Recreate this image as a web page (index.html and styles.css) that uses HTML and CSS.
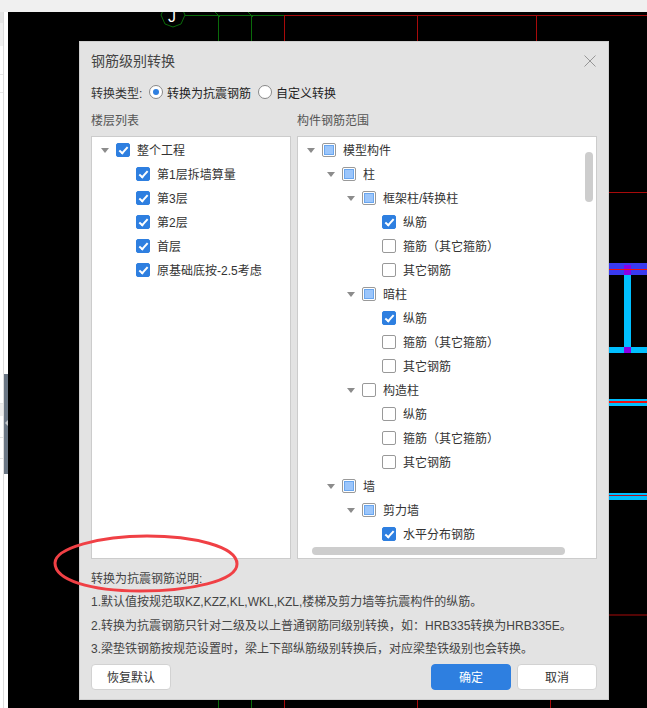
FILE: index.html
```html
<!DOCTYPE html>
<html lang="zh-CN">
<head>
    <meta charset="UTF-8">
    <meta name="viewport" content="width=device-width, initial-scale=1.0">
    <title>钢筋级别转换</title>
    <link rel="stylesheet" href="styles.css">
</head>
<body>
    <!-- CAD drawing behind the dialog -->
    <svg class="drawing" width="647" height="708" viewBox="0 0 647 708">
        <g stroke="#0a6a0a" fill="none">
            <polygon points="173,3 181,6 185,15 181,24 173,27 165,24 161,15 165,6" />
            <line x1="185" y1="15.5" x2="284" y2="15.5" />
            <line x1="218.5" y1="15" x2="218.5" y2="41" />
            <line x1="251.5" y1="15" x2="251.5" y2="41" />
            <line x1="215" y1="12" x2="220" y2="17" />
            <line x1="248" y1="12" x2="253" y2="17" />
            <line x1="218.5" y1="700" x2="218.5" y2="708" />
            <line x1="251.5" y1="700" x2="251.5" y2="708" />
        </g>
        <text x="168" y="22" class="axis-label">J</text>
        <g stroke="#a80a0a" fill="none">
            <line x1="284" y1="15.5" x2="647" y2="15.5" />
            <line x1="284.5" y1="15" x2="284.5" y2="41" />
            <line x1="417.5" y1="15" x2="417.5" y2="41" />
            <line x1="536.5" y1="15" x2="536.5" y2="41" />
            <line x1="284.5" y1="700" x2="284.5" y2="708" />
            <line x1="417.5" y1="700" x2="417.5" y2="708" />
            <line x1="550.5" y1="700" x2="550.5" y2="708" />
            <line x1="609" y1="192.5" x2="647" y2="192.5" />
            <line x1="609" y1="615" x2="647" y2="615" />
        </g>
        <rect x="609" y="263" width="38" height="12" fill="#3a3af0" />
        <rect x="624" y="275" width="7" height="72" fill="#00bfff" />
        <rect x="609" y="347" width="38" height="6" fill="#00bfff" />
        <rect x="609" y="399" width="38" height="7" fill="#00bfff" />
        <rect x="609" y="493" width="38" height="7" fill="#00bfff" />
        <rect x="624" y="265" width="7" height="10" fill="#8a00e6" />
        <rect x="624" y="347" width="7" height="6" fill="#8a00e6" />
        <rect x="609" y="269" width="38" height="1" fill="#f01010" />
        <rect x="609" y="401" width="38" height="2" fill="#f01010" />
        <rect x="609" y="495" width="38" height="1" fill="#b01020" />
    </svg>

    <div class="top-bar"></div>
    <div class="side-strip">
        <div class="side-rows">
            <div class="side-head"></div>
            <div class="side-sub"></div>
            <div class="side-item side-item-a"></div>
            <div class="side-item side-item-b"></div>
            <div class="side-item side-item-c"></div>
            <div class="side-sel"></div>
            <div class="side-item side-item-d"></div>
            <div class="side-item side-item-e"></div>
        </div>
        <span class="side-handle"></span>
    </div>

    <div class="dialog">
        <div class="dialog-title">
            <span class="title-text">钢筋级别转换</span>
            <svg class="close-icon" width="12" height="12" viewBox="0 0 12 12">
                <path d="M0.5 0.5 L11.5 11.5 M11.5 0.5 L0.5 11.5" stroke="#969696" stroke-width="1" fill="none" />
            </svg>
        </div>

        <div class="type-row">
            <span class="type-label">转换类型:</span>
            <span class="radio radio-on"></span>
            <span class="radio-text">转换为抗震钢筋</span>
            <span class="radio"></span>
            <span class="radio-text">自定义转换</span>
        </div>

        <div class="columns">
            <div class="col col-left">
                <div class="col-label">楼层列表</div>
                <div class="panel">
                    <div class="row lv0"><span class="arrow"></span><span class="box checked"></span>整个工程</div>
                    <div class="row lv1"><span class="arrow"></span><span class="box checked"></span>第1层拆墙算量</div>
                    <div class="row lv1"><span class="arrow"></span><span class="box checked"></span>第3层</div>
                    <div class="row lv1"><span class="arrow"></span><span class="box checked"></span>第2层</div>
                    <div class="row lv1"><span class="arrow"></span><span class="box checked"></span>首层</div>
                    <div class="row lv1"><span class="arrow"></span><span class="box checked"></span>原基础底按-2.5考虑</div>
                </div>
            </div>
            <div class="col col-right">
                <div class="col-label">构件钢筋范围</div>
                <div class="panel">
                    <div class="row lv0"><span class="arrow open"></span><span class="box partial"></span>模型构件</div>
                    <div class="row lv1"><span class="arrow open"></span><span class="box partial"></span>柱</div>
                    <div class="row lv2"><span class="arrow open"></span><span class="box partial"></span>框架柱/转换柱</div>
                    <div class="row lv3"><span class="arrow"></span><span class="box checked"></span>纵筋</div>
                    <div class="row lv3"><span class="arrow"></span><span class="box"></span>箍筋（其它箍筋）</div>
                    <div class="row lv3"><span class="arrow"></span><span class="box"></span>其它钢筋</div>
                    <div class="row lv2"><span class="arrow open"></span><span class="box partial"></span>暗柱</div>
                    <div class="row lv3"><span class="arrow"></span><span class="box checked"></span>纵筋</div>
                    <div class="row lv3"><span class="arrow"></span><span class="box"></span>箍筋（其它箍筋）</div>
                    <div class="row lv3"><span class="arrow"></span><span class="box"></span>其它钢筋</div>
                    <div class="row lv2"><span class="arrow open"></span><span class="box"></span>构造柱</div>
                    <div class="row lv3"><span class="arrow"></span><span class="box"></span>纵筋</div>
                    <div class="row lv3"><span class="arrow"></span><span class="box"></span>箍筋（其它箍筋）</div>
                    <div class="row lv3"><span class="arrow"></span><span class="box"></span>其它钢筋</div>
                    <div class="row lv1"><span class="arrow open"></span><span class="box partial"></span>墙</div>
                    <div class="row lv2"><span class="arrow open"></span><span class="box partial"></span>剪力墙</div>
                    <div class="row lv3"><span class="arrow"></span><span class="box checked"></span>水平分布钢筋</div>
                    <span class="scroll-v"></span>
                    <span class="scroll-h"></span>
                </div>
            </div>
        </div>

        <div class="notes">
            <p>转换为抗震钢筋说明:</p>
            <p>1.默认值按规范取KZ,KZZ,KL,WKL,KZL,楼梯及剪力墙等抗震构件的纵筋。</p>
            <p>2.转换为抗震钢筋只针对二级及以上普通钢筋同级别转换，如：HRB335转换为HRB335E。</p>
            <p>3.梁垫铁钢筋按规范设置时，梁上下部纵筋级别转换后，对应梁垫铁级别也会转换。</p>
        </div>

        <div class="footer">
            <button class="btn">恢复默认</button>
            <span class="footer-gap"></span>
            <button class="btn btn-primary">确定</button>
            <button class="btn">取消</button>
        </div>
    </div>

    <!-- red marker ring someone drew over the screenshot -->
    <svg class="marker" width="647" height="708" viewBox="0 0 647 708">
        <path d="M147 536 C192 536 237 546 237 564 C237 581 190 591 140 591 C90 591 55 580 55 563 C55 548 100 536 147 536 Z" />
    </svg>
</body>
</html>
```

FILE: styles.css
```css
html, body {
    margin: 0;
    height: 708px;
    overflow: hidden;
}
body {
    position: relative;
    background-color: #000;
    font-family: "Liberation Sans", "Noto Sans CJK SC", sans-serif;
    font-size: 12px;
    color: #333;
}
p {
    margin: 0;
}

/* Surroundings */
.top-bar {
    position: relative;
    height: 12px;
    background-color: #f0f0f0;
}
.side-strip {
    position: absolute;
    left: 0;
    top: 12px;
    width: 8px;
    bottom: 0;
    background-color: #fff;
}
.side-rows {
    width: 3px;
    height: 100%;
    border-right: 1px solid #dcdcdc;
}
.side-head {
    height: 11px;
    background-color: #e4e4e4;
}
.side-sub {
    height: 23px;
    background-color: #f0f0f0;
}
.side-item {
    border-bottom: 1px solid #e6e6e6;
}
.side-item-a { height: 28px; }
.side-item-b { height: 17px; }
.side-item-c { height: 310px; }
.side-sel {
    height: 12px;
    background-color: #eeeeee;
}
.side-item-d { height: 21px; }
.side-item-e { height: 20px; }
.side-handle {
    position: absolute;
    left: 4px;
    top: 362px;
    width: 4px;
    height: 100px;
    background-color: #6b7785;
}
.side-handle::after {
    content: "";
    position: absolute;
    left: 1px;
    top: 46px;
    border-top: 3px solid transparent;
    border-bottom: 3px solid transparent;
    border-right: 3px solid #c4c8cc;
}
.drawing, .marker {
    position: absolute;
    left: 0;
    top: 0;
}
.axis-label {
    font-size: 16px;
    fill: #fff;
}
.marker {
    pointer-events: none;
}
.marker path {
    fill: none;
    stroke: #f04045;
    stroke-width: 3;
}

/* Dialog */
.dialog {
    position: absolute;
    left: 79px;
    top: 41px;
    width: 530px;
    height: 659px;
    box-sizing: border-box;
    padding: 0 11px;
    background-color: #e3e3e3;
    border: 1px solid #cfcfcf;
    color: #444;
}
.dialog-title {
    display: flex;
    align-items: center;
    justify-content: space-between;
    height: 38px;
    font-size: 14px;
}
.title-text {
    margin-bottom: 2px;
}
.close-icon {
    margin-right: 1px;
}
.type-row {
    display: flex;
    align-items: center;
    height: 24px;
    color: #333;
}
.type-label {
    width: 52px;
}
.radio {
    width: 14px;
    height: 14px;
    box-sizing: border-box;
    border: 1px solid #888;
    border-radius: 50%;
    background-color: #fff;
    margin-left: 6px;
    margin-right: 4px;
    display: flex;
    align-items: center;
    justify-content: center;
}
.radio-on::after {
    content: "";
    width: 6px;
    height: 6px;
    border-radius: 50%;
    background-color: #2e7fe0;
}
.radio-text {
    margin-right: 1px;
    color: #222;
}

.columns {
    display: flex;
    gap: 6px;
    margin-top: 5px;
}
.col-left {
    width: 200px;
}
.col-right {
    width: 300px;
}
.col-label {
    height: 27px;
    line-height: 24px;
    color: #555;
}
.panel {
    position: relative;
    height: 423px;
    box-sizing: border-box;
    padding-top: 1px;
    background-color: #fff;
    border: 1px solid #cccccc;
    overflow: hidden;
}

/* Tree rows */
.row {
    display: flex;
    align-items: center;
    height: 24px;
    box-sizing: border-box;
    padding-bottom: 2px;
    color: #333;
    white-space: nowrap;
}
.lv0 { padding-left: 8px; }
.lv1 { padding-left: 28px; }
.lv2 { padding-left: 48px; }
.lv3 { padding-left: 68px; }
.arrow {
    width: 16px;
    height: 4px;
    margin-top: 2px;
    position: relative;
}
.lv0 .arrow::after, .arrow.open::after {
    content: "";
    position: absolute;
    left: 1px;
    top: 0;
    border-left: 4px solid transparent;
    border-right: 4px solid transparent;
    border-top: 5px solid #8c8c8c;
}
.box {
    width: 14px;
    height: 14px;
    box-sizing: border-box;
    margin-top: 2px;
    margin-right: 7px;
    border: 1px solid #999;
    border-radius: 2px;
    background-color: #fff;
    flex-shrink: 0;
    position: relative;
}
.box.checked {
    background-color: #2e7fe0;
    border-color: #2e7fe0;
}
.box.checked::after {
    content: "";
    position: absolute;
    left: 4px;
    top: 1px;
    width: 3px;
    height: 7px;
    border: solid #fff;
    border-width: 0 2px 2px 0;
    transform: rotate(42deg);
}
.box.partial::after {
    content: "";
    position: absolute;
    left: 2px;
    top: 2px;
    width: 8px;
    height: 8px;
    background-color: #9cc6fb;
    outline: 1px solid #6aa6ee;
}

.scroll-v {
    position: absolute;
    right: 3px;
    top: 15px;
    width: 8px;
    height: 50px;
    border-radius: 4px;
    background-color: #cdcdcd;
}
.scroll-h {
    position: absolute;
    left: 14px;
    bottom: 3px;
    width: 253px;
    height: 8px;
    border-radius: 4px;
    background-color: #cdcdcd;
}

/* Notes and buttons */
.notes {
    margin-top: 9px;
    line-height: 23.4px;
    color: #444;
}
.footer {
    display: flex;
    gap: 6px;
    margin-top: 2px;
}
.footer-gap {
    flex: 1;
}
.btn {
    width: 80px;
    height: 26px;
    padding: 0;
    font-family: inherit;
    font-size: 12px;
    color: #333;
    background-color: #fff;
    border: 1px solid #d2d2d2;
    border-radius: 4px;
}
.btn-primary {
    background-color: #2e7fe0;
    border-color: #2e7fe0;
    color: #fff;
}
```
